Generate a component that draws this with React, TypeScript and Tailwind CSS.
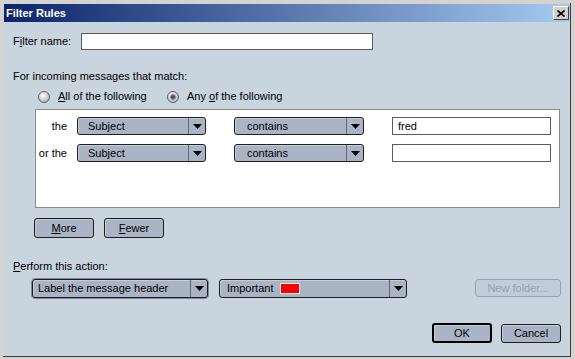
import React from 'react';

const Arrow = () => (
  <svg width="9" height="5" viewBox="0 0 9 5">
    <polygon points="0,0 9,0 4.5,5" fill="#000" />
  </svg>
);

interface SelectProps {
  className: string;
  pad: string;
  children: React.ReactNode;
}

const Select: React.FC<SelectProps> = ({ className, pad, children }) => (
  <div className={`flex rounded-[3px] border border-[#1e1e1e] bg-[#a9b5c5] shadow-[inset_1px_1px_0_#c3cddb] ${className}`}>
    <div className={`flex flex-1 items-center ${pad}`}>{children}</div>
    <div className="flex w-[17px] items-center justify-center border-l border-[#5d6979]">
      <Arrow />
    </div>
  </div>
);

const Button: React.FC<{ className: string; children: React.ReactNode }> = ({ className, children }) => (
  <div className={`flex items-center justify-center rounded-[3px] bg-[#a9b5c5] shadow-[inset_1px_1px_0_#c3cddb] ${className}`}>
    {children}
  </div>
);

const Radio: React.FC<{ checked?: boolean }> = ({ checked }) => (
  <div className="flex h-[12px] w-[12px] items-center justify-center rounded-full border border-[#5a6068] bg-[radial-gradient(circle_at_40%_35%,#ffffff,#9aa2ab)]">
    {checked && <div className="h-[6px] w-[6px] rounded-full border border-[#8a9098] bg-[#4b5259]" />}
  </div>
);

export default function App() {
  return (
    <div className="h-[359px] w-[575px] overflow-hidden bg-[#d6d3ce] pl-[3px] pr-[4px] pt-[3px] pb-[2px] font-['Liberation_Sans',Arial,sans-serif] text-[11px] leading-[13px] text-black">
      <div className="flex h-full flex-col border-b border-r border-[#3c3c3c] bg-[#c8d4de]">
        {/* title bar */}
        <div className="ml-[1px] mt-[1px] flex h-[18px] items-center justify-between bg-[linear-gradient(90deg,#0a246a,#a6caf0)]">
          <span className="pl-[2px] font-bold text-white">Filter Rules</span>
          <div className="mr-[1px] flex h-[14px] w-[16px] items-center justify-center border-b border-r border-[#404040] border-l border-t border-l-white border-t-white bg-[#d4d0c8]">
            <svg width="8" height="7" viewBox="0 0 8 7">
              <path d="M0.5 0.5 L7.5 6.5 M7.5 0.5 L0.5 6.5" stroke="#000" strokeWidth="1.6" />
            </svg>
          </div>
        </div>

        <div className="flex flex-1 flex-col pl-[10px]">
          <div className="mt-[11px] flex h-[17px] items-center">
            <span className="w-[68px]">
              F<span className="underline">i</span>lter name:
            </span>
            <div className="h-[17px] w-[292px] border border-[#5c5c5c] bg-white" />
          </div>

          <div className="mt-[20px]">For incoming messages that match:</div>

          <div className="ml-[25px] mt-[7px] flex h-[13px] items-center">
            <div className="flex w-[129px] items-center gap-[8px]">
              <Radio />
              <span>
                <span className="underline">A</span>ll of the following
              </span>
            </div>
            <div className="flex items-center gap-[8px]">
              <Radio checked />
              <span>
                Any <span className="underline">o</span>f the following
              </span>
            </div>
          </div>

          <div className="ml-[22px] mt-[6px] flex h-[99px] w-[525px] flex-col gap-[9px] border border-[#8a8a8a] bg-white pt-[7px]">
            {[
              { label: 'the', value: 'fred' },
              { label: 'or the', value: '' },
            ].map((r) => (
              <div key={r.label} className="flex h-[18px] items-center">
                <span className="w-[33px] pr-[2px] text-right">{r.label}</span>
                <Select className="ml-[8px] h-[18px] w-[129px]" pad="pl-[10px]">
                  Subject
                </Select>
                <Select className="ml-[28px] h-[18px] w-[130px]" pad="pl-[12px]">
                  contains
                </Select>
                <div className="ml-[28px] flex h-[18px] w-[159px] items-center border border-[#5c5c5c] bg-white pl-[5px]">
                  {r.value}
                </div>
              </div>
            ))}
          </div>

          <div className="ml-[21px] mt-[10px] flex">
            <Button className="h-[20px] w-[60px] border border-[#1e1e1e]">
              <span>
                <span className="underline">M</span>ore
              </span>
            </Button>
            <Button className="ml-[10px] h-[20px] w-[60px] border border-[#1e1e1e]">
              <span>
                <span className="underline">F</span>ewer
              </span>
            </Button>
          </div>

          <div className="mt-[22px]">
            <span className="underline">P</span>erform this action:
          </div>

          <div className="mt-[5px] flex items-start pr-[9px]">
            <div className="ml-[18px] rounded-[4px] border border-[#7d8999]">
              <Select className="h-[19px] w-[176px]" pad="pl-[5px]">
                Label the message header
              </Select>
            </div>
            <Select className="ml-[10px] mt-[1px] h-[19px] w-[188px]" pad="pl-[7px] gap-[7px]">
              <span>Important</span>
              <div className="h-[11px] w-[20px] border border-[#e8e8e8] bg-[#ff0000]" />
            </Select>
            <div className="ml-auto mt-[1px] flex h-[18px] w-[86px] items-center justify-center rounded-[3px] border border-[#98a4b3] bg-[#c0ccd7] text-[#97a3b1]">
              New folder...
            </div>
          </div>

          <div className="mt-[24px] flex items-start justify-end pr-[9px]">
            <Button className="h-[20px] w-[60px] border-2 border-[#000]">OK</Button>
            <Button className="ml-[9px] mt-[1px] h-[19px] w-[60px] border border-[#1e1e1e]">Cancel</Button>
          </div>
        </div>
      </div>
    </div>
  );
}
